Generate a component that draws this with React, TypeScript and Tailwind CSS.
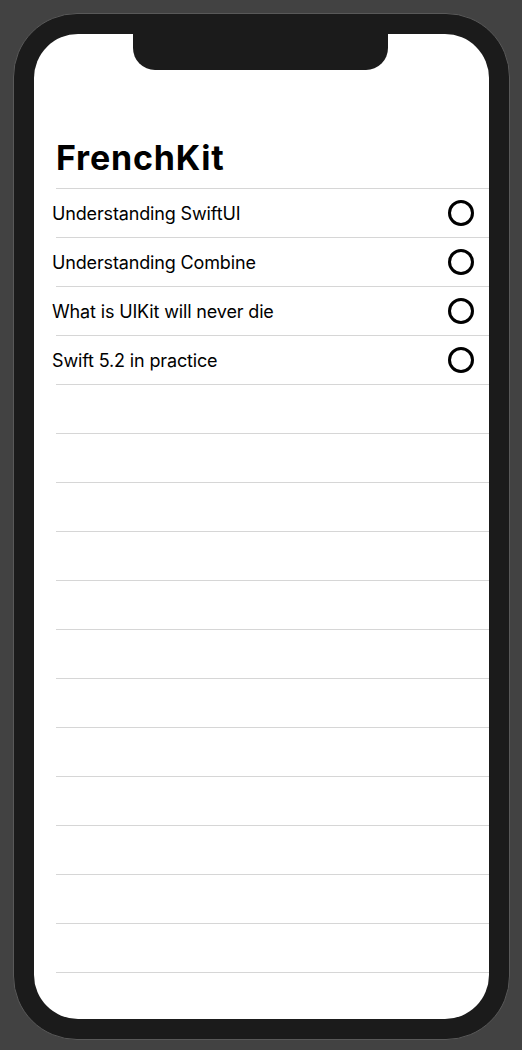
const talks = [
  "Understanding SwiftUI",
  "Understanding Combine",
  "What is UIKit will never die",
  "Swift 5.2 in practice",
];

const rows = Array.from({ length: 16 }, (_, i) => talks[i] ?? null);

export default function App() {
  return (
    <div className="min-h-[1050px] w-[522px] bg-[#424242] pt-[13px] pl-[13px]">
      <div className="w-[497px] h-[1027px] rounded-[64px] bg-[#1b1b1b] border border-[#595959] p-[20px]">
        <div
          className="relative h-full w-full rounded-[44px] bg-white overflow-hidden"
          style={{ fontFamily: "Inter, 'Noto Sans', sans-serif" }}
        >
          {/* notch */}
          <div className="absolute left-[99px] top-0 w-[255px] h-[36px] bg-[#1b1b1b] rounded-b-[22px]" />

          <div className="pt-[104px] pl-[22px]">
            <h1 className="text-[34px] leading-[40px] font-bold tracking-[0.8px] text-black">
              FrenchKit
            </h1>
          </div>

          <div className="mt-[10px]">
            <div className="ml-[22px] h-px bg-[#d6d6d6]" />
            {rows.map((title, i) => (
              <div key={i}>
                <div className="h-[48px] flex items-center pl-[18px] pr-[15px]">
                  {title && (
                    <>
                      <span className="flex-1 text-[18px] tracking-[-0.15px] text-black">{title}</span>
                      <span className="w-[26px] h-[26px] rounded-full border-[3.5px] border-black" />
                    </>
                  )}
                </div>
                <div className="ml-[22px] h-px bg-[#d6d6d6]" />
              </div>
            ))}
          </div>
        </div>
      </div>
    </div>
  );
}
